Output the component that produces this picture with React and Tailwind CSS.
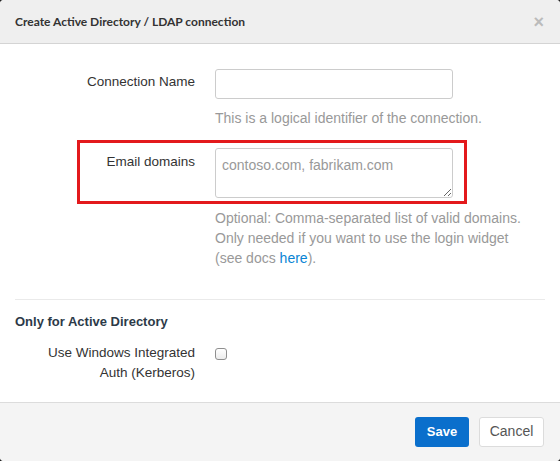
import React from 'react';

const font = { fontFamily: '"Liberation Sans", Arial, sans-serif' };

const App = () => {
  return (
    <div className="w-[560px] h-[461px] bg-[#222]" style={font}>
      <div className="w-full h-full bg-white rounded-[4px] overflow-hidden flex flex-col">
        {/* header */}
        <div className="h-[44px] shrink-0 bg-[#efefef] border-b border-[#d4d4d4] flex items-center justify-between pl-[15px] pr-[16px]">
          <h3 className="text-[12px] font-bold text-[#333] pt-[1px]" style={{ fontFamily: 'Lato, sans-serif' }}>
            Create Active Directory / LDAP connection
          </h3>
          <button className="text-[#bbb] text-[18px] font-bold leading-none">×</button>
        </div>

        {/* body */}
        <div className="flex-1 px-[15px] pt-[25px]">
          <div className="flex items-start">
            <label className="w-[180px] text-right text-[13.5px] text-[#333] leading-[20px] pt-[3px]">
              Connection Name
            </label>
            <div className="ml-[20px]">
              <input
                type="text"
                className="w-[238px] h-[30px] border border-[#ccc] rounded-[3px] px-[8px] text-[14px] outline-none"
              />
              <p className="mt-[9px] text-[14px] leading-[20px] text-[#999]">
                This is a logical identifier of the connection.
              </p>
            </div>
          </div>

          <div className="mt-[12px] ml-[62px] w-[390px] border-[3px] border-[#e3191c] flex items-start pt-[5px] pb-[3px]">
            <label className="flex-1 text-right text-[13.5px] text-[#333] leading-[20px] pt-[4px]">
              Email domains
            </label>
            <textarea
              placeholder="contoso.com, fabrikam.com"
              className="ml-[20px] mr-[11px] w-[238px] h-[50px] border border-[#ccc] rounded-[3px] px-[6px] pt-[6px] text-[14px] placeholder:text-[#999] outline-none"
            />
          </div>
          <p className="ml-[200px] mt-[4px] text-[14px] leading-[20px] text-[#999] w-[310px]">
            Optional: Comma-separated list of valid domains. Only needed if you want to use the login widget (see docs{' '}
            <a className="text-[#0a84d4]">here</a>).
          </p>

          <div className="mt-[31px] border-t border-[#eaeaea]" />

          <h4 className="mt-[12px] text-[13px] font-bold text-[#2d3a48] leading-[20px]">
            Only for Active Directory
          </h4>

          <div className="mt-[11px] flex items-start">
            <label className="w-[180px] text-right text-[13.5px] text-[#333] leading-[20px]">
              Use Windows Integrated
              <br />
              Auth (Kerberos)
            </label>
            <div className="ml-[20px] pt-[5px]">
              <span className="block w-[12px] h-[12px] rounded-[3px] border border-[#8f8f8f] bg-gradient-to-b from-white to-[#ececec]" />
            </div>
          </div>
        </div>

        {/* footer */}
        <div className="h-[59px] shrink-0 bg-[#f4f4f4] border-t border-[#dcdcdc] flex items-center justify-end gap-[10px] pr-[16px] pb-[1px]">
          <button className="w-[54px] h-[30px] rounded-[3px] bg-[#0a6fcc] text-white text-[13px] font-bold">
            Save
          </button>
          <button className="w-[65px] h-[30px] rounded-[3px] bg-white border border-[#dcdcdc] text-[#555] text-[14px]">
            Cancel
          </button>
        </div>
      </div>
    </div>
  );
};

export default App;
